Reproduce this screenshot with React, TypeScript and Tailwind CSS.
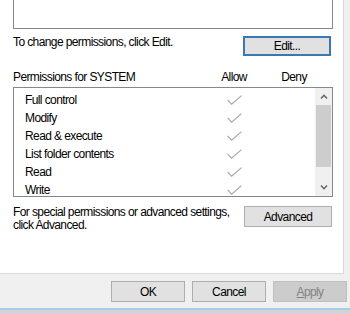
const permissions = [
  "Full control",
  "Modify",
  "Read & execute",
  "List folder contents",
  "Read",
  "Write",
];

function Check() {
  return (
    <svg width="15" height="10" viewBox="0 0 15 10" fill="none">
      <path d="M0.5 4.8 L4.6 9.2 L14.5 0.6" stroke="#a9a9a9" strokeWidth="1.2" />
    </svg>
  );
}

function Chevron({ up }: { up?: boolean }) {
  return (
    <svg width="8" height="5" viewBox="0 0 8 5" fill="none">
      <path
        d={up ? "M1 4.5 L4 1.2 L7 4.5" : "M1 0.5 L4 3.8 L7 0.5"}
        stroke="#606060"
        strokeWidth="1.4"
      />
    </svg>
  );
}

function Button({ label, className = "" }: { label: React.ReactNode; className?: string }) {
  return (
    <div
      className={`h-[21px] flex items-center justify-center bg-[#e1e1e1] border border-[#adadad] ${className}`}
    >
      {label}
    </div>
  );
}

export default function App() {
  return (
    <div
      className="w-[350px] h-[314px] bg-[#f0f0f0] flex flex-col overflow-hidden text-[12px] text-black tracking-[-0.6px]"
      style={{ fontFamily: '"Liberation Sans", Arial, sans-serif' }}
    >
      {/* Tab page */}
      <div className="w-[344px] h-[274px] shrink-0 bg-white border-r border-b border-[#d9d9d9] pl-[13px] pr-[10px] flex flex-col">
        {/* Group or user names list (scrolled off top) */}
        <div className="h-[29px] border-x border-b border-[#828790]" />

        <div className="mt-[7px] flex justify-between items-start">
          <span className="leading-[13px]">To change permissions, click Edit.</span>
          <div className="mr-[2px] w-[88px] h-[20px] flex items-center justify-center bg-[#e1e1e1] border border-[#3a78b4] shadow-[inset_0_0_0_1px_#3a78b4]">
            Edit...
          </div>
        </div>

        {/* Header */}
        <div className="mt-[13px] h-[16px] flex items-center">
          <span className="w-[191px]">Permissions for SYSTEM</span>
          <span className="w-[60px] text-center">Allow</span>
          <span className="w-[60px] text-center">Deny</span>
        </div>

        {/* Permissions list */}
        <div className="mt-[2px] h-[110px] border border-[#828790] flex overflow-hidden">
          <div className="flex-1 pt-[3px] overflow-hidden">
            {permissions.map((p) => (
              <div key={p} className="h-[18px] flex items-center">
                <span className="w-[190px] pl-[11px]">{p}</span>
                <span className="w-[60px] flex justify-center">
                  <Check />
                </span>
              </div>
            ))}
          </div>
          <div className="w-[17px] bg-[#f0f0f0] flex flex-col">
            <div className="h-[17px] flex items-center justify-center">
              <Chevron up />
            </div>
            <div className="h-[62px] mx-[1px] bg-[#cdcdcd]" />
            <div className="flex-1" />
            <div className="h-[17px] flex items-center justify-center">
              <Chevron />
            </div>
          </div>
        </div>

        <div className="mt-[9px] flex justify-between items-start">
          <span className="leading-[13px]">
            For special permissions or advanced settings,
            <br />
            click Advanced.
          </span>
          <Button label="Advanced" className="mr-[1px] w-[88px]" />
        </div>
      </div>

      {/* Dialog buttons */}
      <div className="mt-[7px] pl-[111px] flex gap-[7px]">
        <Button label="OK" className="w-[74px]" />
        <Button label="Cancel" className="w-[74px]" />
        <div className="w-[74px] h-[21px] flex items-center justify-center bg-[#cccccc] border border-[#bfbfbf] text-[#838383]">
          <span>
            <span className="underline">A</span>pply
          </span>
        </div>
      </div>

      <div className="mt-[6px] h-[2px] bg-[#a9cbea]" />
      <div className="flex-1 bg-[#d3d3d3]" />
    </div>
  );
}
